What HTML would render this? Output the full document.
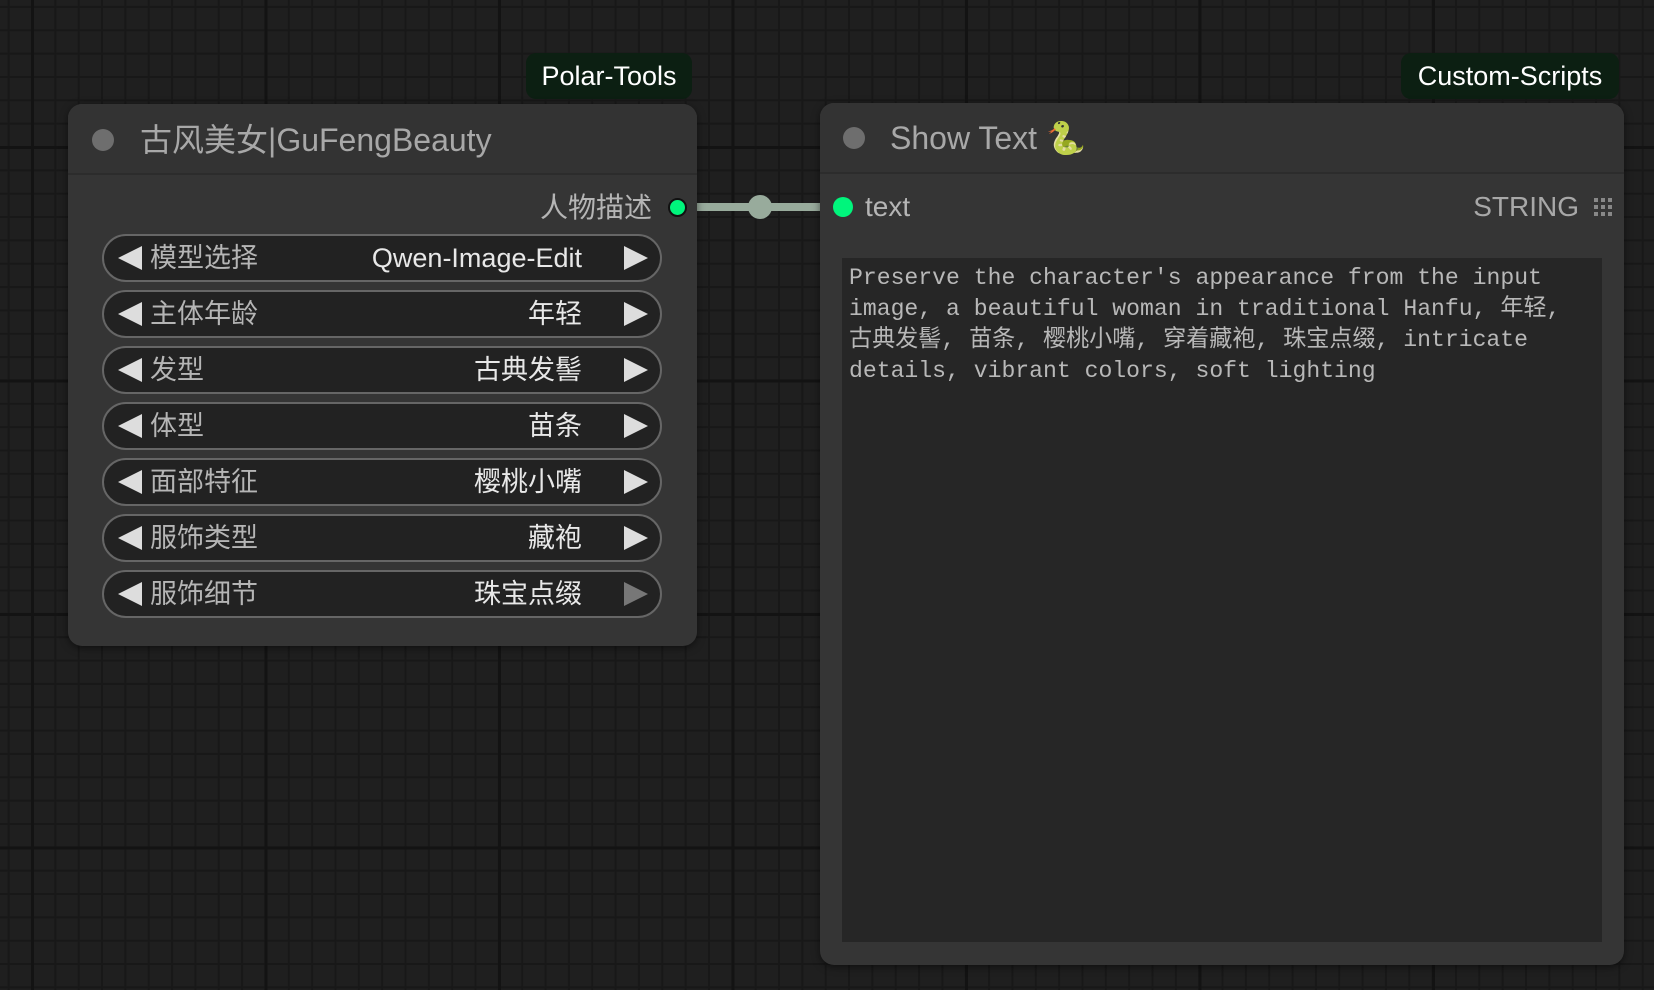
<!DOCTYPE html>
<html><head><meta charset="utf-8"><style>
*{margin:0;padding:0;box-sizing:border-box}
body{width:1654px;height:990px;overflow:hidden;position:relative;font-family:"Liberation Sans","Noto Sans CJK SC",sans-serif;
background-color:#1f1f1f;
background-image:linear-gradient(#131313 3px,transparent 3px),linear-gradient(90deg,#131313 3px,transparent 3px),linear-gradient(#181818 2px,transparent 2px),linear-gradient(90deg,#181818 2px,transparent 2px);
background-size:233.5px 233.5px,233.5px 233.5px,23.35px 23.35px,23.35px 23.35px;
background-position:31px 146px,31px 146px,31px 146px,31px 146px;}
.abs{position:absolute}
.node{position:absolute;background:#353535;border-radius:14px;box-shadow:0 2px 8px rgba(0,0,0,.5)}
.title{position:absolute;left:0;right:0;top:0;height:71px;border-bottom:2px solid #2c2c2c;border-radius:14px 14px 0 0;background:#333}
.dot{position:absolute;width:22px;height:22px;border-radius:50%;background:#6e6e6e}
.ttext{position:absolute;color:#a8a8a8;font-size:32px;line-height:40px;white-space:nowrap}
.badge{position:absolute;background:#0c1f12;border-radius:10px;color:#fff;font-size:27px;text-align:center;line-height:46px;height:46px}
.w{position:absolute;left:34px;width:560px;height:48px;border:2px solid #666;border-radius:24px;background:#222}
.w .l{position:absolute;left:14px;top:10px;width:0;height:0;border-top:12px solid transparent;border-bottom:12px solid transparent;border-right:24px solid #ddd}
.w .r{position:absolute;right:12px;top:10px;width:0;height:0;border-top:12px solid transparent;border-bottom:12px solid transparent;border-left:24px solid #ddd}
.w .lab{position:absolute;left:46px;top:0;line-height:44px;font-size:27px;color:#b5b5b5}
.w .val{position:absolute;right:78px;top:0;line-height:44px;font-size:27px;color:#e8e8e8}
</style></head><body>
<div class="abs" style="left:690px;top:203px;width:132px;height:8px;background:#98ab9c"></div>
<div class="abs" style="left:748px;top:195px;width:24px;height:24px;border-radius:50%;background:#98ab9c"></div>

<div class="badge" style="left:526px;top:53px;width:166px">Polar-Tools</div>
<div class="node" style="left:68px;top:104px;width:629px;height:542px">
<div class="title"></div>
<div class="dot" style="left:24px;top:25px"></div>
<div class="ttext" style="left:72px;top:16px">古风美女|GuFengBeauty</div>
<div class="abs" style="right:45px;top:84px;line-height:40px;font-size:28px;color:#b5b5b5">人物描述</div>
<div class="abs" style="left:600px;top:94px;width:19px;height:19px;border-radius:50%;background:#00f57c;border:2px solid #111"></div>
<div class="w" style="top:130px"><div class="l"></div><div class="lab">模型选择</div><div class="val">Qwen-Image-Edit</div><div class="r"></div></div>
<div class="w" style="top:186px"><div class="l"></div><div class="lab">主体年龄</div><div class="val">年轻</div><div class="r"></div></div>
<div class="w" style="top:242px"><div class="l"></div><div class="lab">发型</div><div class="val">古典发髻</div><div class="r"></div></div>
<div class="w" style="top:298px"><div class="l"></div><div class="lab">体型</div><div class="val">苗条</div><div class="r"></div></div>
<div class="w" style="top:354px"><div class="l"></div><div class="lab">面部特征</div><div class="val">樱桃小嘴</div><div class="r"></div></div>
<div class="w" style="top:410px"><div class="l"></div><div class="lab">服饰类型</div><div class="val">藏袍</div><div class="r"></div></div>
<div class="w" style="top:466px"><div class="l"></div><div class="lab">服饰细节</div><div class="val">珠宝点缀</div><div class="r" style="border-left-color:#777"></div></div>
</div>

<div class="badge" style="left:1401px;top:53px;width:218px">Custom-Scripts</div>
<div class="node" style="left:820px;top:103px;width:804px;height:862px">
<div class="title"></div>
<div class="dot" style="left:23px;top:24px"></div>
<div class="ttext" style="left:70px;top:15px">Show Text 🐍</div>
<div class="abs" style="left:13px;top:94px;width:20px;height:20px;border-radius:50%;background:#00f57c"></div>
<div class="abs" style="left:45px;top:86px;line-height:36px;font-size:28px;color:#b5b5b5">text</div>
<div class="abs" style="right:45px;top:86px;line-height:36px;font-size:28px;color:#a8a8a8">STRING</div>
<svg class="abs" style="left:773px;top:94px" width="20" height="20" viewBox="0 0 20 20" fill="#888"><rect x="1" y="1" width="4" height="4"/><rect x="8" y="1" width="4" height="4"/><rect x="15" y="1" width="4" height="4"/><rect x="1" y="8" width="4" height="4"/><rect x="8" y="8" width="4" height="4"/><rect x="15" y="8" width="4" height="4"/><rect x="1" y="15" width="4" height="4"/><rect x="8" y="15" width="4" height="4"/><rect x="15" y="15" width="4" height="4"/></svg>
<div class="abs" style="left:22px;top:155px;width:760px;height:684px;background:#262626;padding:5px 7px;font-family:'Liberation Mono','Noto Sans CJK SC',monospace;font-size:23.1px;line-height:31px;color:#b8b8b8;white-space:pre">Preserve the character's appearance from the input
image, a beautiful woman in traditional Hanfu, 年轻,
古典发髻, 苗条, 樱桃小嘴, 穿着藏袍, 珠宝点缀, intricate
details, vibrant colors, soft lighting</div>
</div>
</body></html>
